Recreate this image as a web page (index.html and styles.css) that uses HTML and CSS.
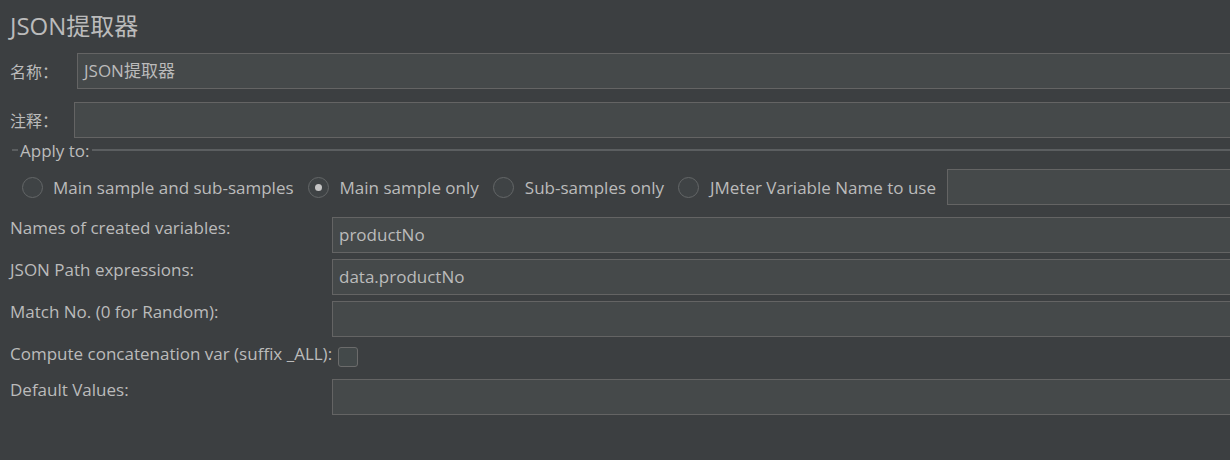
FILE: index.html
```html
<!DOCTYPE html>
<html>
<head>
<meta charset="utf-8">
<link rel="stylesheet" href="styles.css">
</head>
<body>
<div class="page">
  <div class="title">JSON提取器</div>
  <div class="row row-name">
    <span class="label lbl-name">名称：</span>
    <div class="input">JSON提取器</div>
  </div>
  <div class="row row-comment">
    <span class="label lbl-comment">注释：</span>
    <div class="input"></div>
  </div>
  <div class="group">
    <div class="group-head">
      <span class="tick"></span>
      <span class="group-title">Apply to:</span>
      <span class="rule"></span>
    </div>
    <div class="radios">
      <span class="radio first"></span><span class="rlabel">Main sample and sub-samples</span>
      <span class="radio on"></span><span class="rlabel">Main sample only</span>
      <span class="radio"></span><span class="rlabel">Sub-samples only</span>
      <span class="radio"></span><span class="rlabel">JMeter Variable Name to use</span>
      <div class="input var-input"></div>
    </div>
  </div>
  <div class="form">
    <div class="frow">
      <span class="flabel">Names of created variables:</span>
      <div class="input">productNo</div>
    </div>
    <div class="frow">
      <span class="flabel">JSON Path expressions:</span>
      <div class="input">data.productNo</div>
    </div>
    <div class="frow">
      <span class="flabel">Match No. (0 for Random):</span>
      <div class="input"></div>
    </div>
    <div class="frow frow-check">
      <span class="flabel short">Compute concatenation var (suffix _ALL):</span>
      <span class="checkbox"></span>
    </div>
    <div class="frow">
      <span class="flabel">Default Values:</span>
      <div class="input"></div>
    </div>
  </div>
</div>
</body>
</html>
```

FILE: styles.css
```css
html, body {
  margin: 0;
  padding: 0;
  background: #3c3f41;
  overflow: hidden;
}
body {
  width: 1230px;
  height: 460px;
  font-family: "Open Sans", "Noto Sans CJK SC", sans-serif;
  color: #bbbbbb;
  font-size: 17px;
}
.page {
  padding-left: 10px;
  margin-right: -6px;
}
.title {
  font-size: 24px;
  height: 53px;
  line-height: 51px;
}
.row {
  display: flex;
  align-items: center;
  height: 36px;
}
.row-comment {
  margin-top: 13px;
}
.label {
  font-family: "Noto Sans CJK SC", sans-serif;
  font-size: 16px;
}
.lbl-name { width: 67px; }
.lbl-comment { width: 64px; }
.input {
  flex: 1;
  box-sizing: border-box;
  height: 36px;
  background: #45494a;
  border: 1px solid #646464;
  padding: 0 6px;
  line-height: 34px;
  font-size: 17px;
  color: #bbbbbb;
  font-family: "Open Sans", "Noto Sans CJK SC", sans-serif;
}
.group-head {
  display: flex;
  align-items: center;
  height: 24px;
}
.tick {
  width: 6px;
  height: 2px;
  background: #5b5e60;
  margin-left: 2px;
}
.group-title {
  padding: 0 2px;
  font-size: 17px;
}
.rule {
  flex: 1;
  height: 2px;
  background: #5b5e60;
}
.radios {
  display: flex;
  align-items: center;
  height: 36px;
  margin-top: 7px;
}
.radio {
  box-sizing: border-box;
  width: 21px;
  height: 21px;
  border-radius: 50%;
  border: 1px solid #646768;
  background: #3f4345;
  margin-left: 14px;
  margin-right: 11px;
  position: relative;
  flex: none;
}
.radio.first {
  margin-left: 12px;
  margin-right: 10px;
}
.radio.on::after {
  content: "";
  position: absolute;
  left: 6px;
  top: 6px;
  width: 7px;
  height: 7px;
  border-radius: 50%;
  background: #c5c5c5;
}
.rlabel {
  font-size: 17px;
  white-space: nowrap;
}
.var-input {
  margin-left: 11px;
}
.form {
  margin-top: 12px;
}
.frow {
  display: flex;
  align-items: flex-start;
  margin-bottom: 6px;
}
.flabel {
  width: 322px;
  flex: none;
  line-height: 20px;
  padding-top: 1px;
}
.flabel.short {
  width: auto;
  margin-right: 6px;
}
.frow-check {
  height: 30px;
  margin-top: 2px;
  margin-bottom: 6px;
}
.checkbox {
  box-sizing: border-box;
  width: 20px;
  height: 20px;
  border: 1px solid #6b6b6b;
  border-radius: 3px;
  background: #43494a;
  margin-top: 4px;
}
```
